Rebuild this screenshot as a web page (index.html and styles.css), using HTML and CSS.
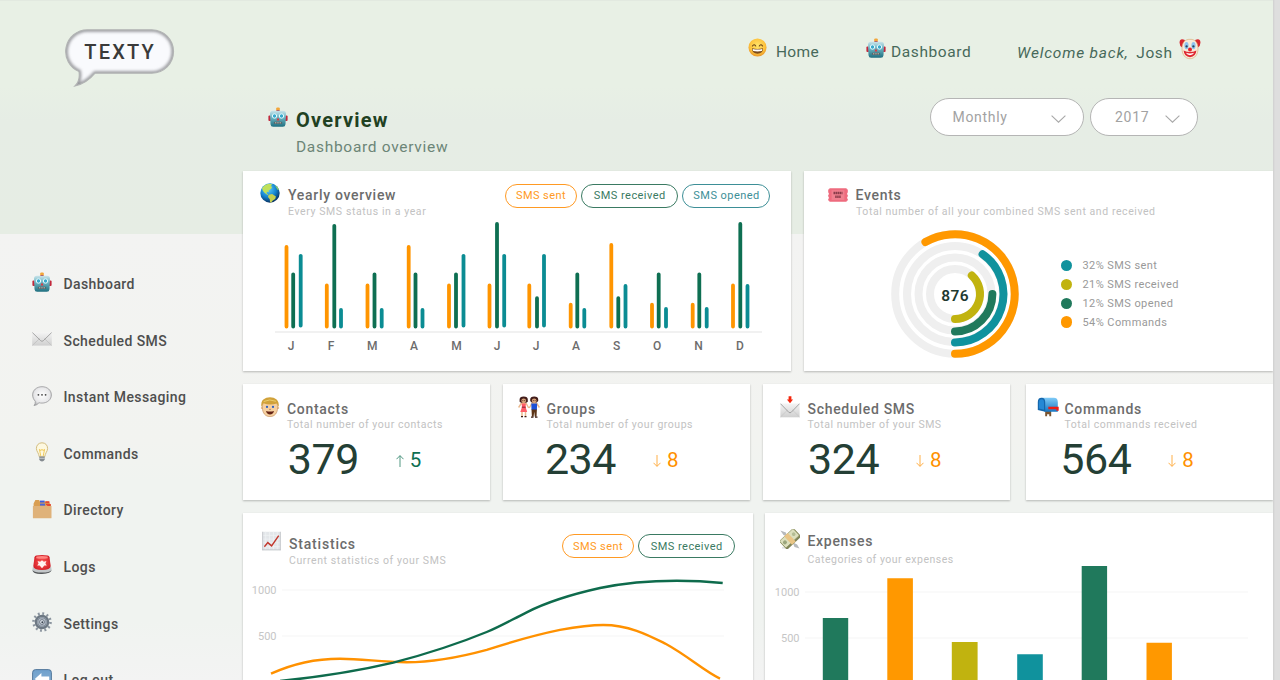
FILE: index.html
```html
<!DOCTYPE html>
<html lang="en">
<head>
<meta charset="utf-8">
<title>Texty – Dashboard</title>
<link rel="stylesheet" href="styles.css">
</head>
<body>
<svg class="defs" width="0" height="0" aria-hidden="true">
  <defs>
    <linearGradient id="gRobot" x1="0" y1="0" x2="0" y2="1"><stop offset="0" stop-color="#c9e3ea"/><stop offset=".4" stop-color="#6fb7c4"/><stop offset="1" stop-color="#1f6f80"/></linearGradient>
    <radialGradient id="gSmile" cx=".5" cy=".4" r=".6"><stop offset="0" stop-color="#ffe56b"/><stop offset=".7" stop-color="#fdc23c"/><stop offset="1" stop-color="#e8952a"/></radialGradient>
    <linearGradient id="gMail" x1="0" y1="0" x2="0" y2="1"><stop offset="0" stop-color="#f4f4f4"/><stop offset="1" stop-color="#cfcfcf"/></linearGradient>
    <radialGradient id="gGlobe" cx=".4" cy=".3" r=".75"><stop offset="0" stop-color="#5fd0ff"/><stop offset=".55" stop-color="#1383cf"/><stop offset="1" stop-color="#06234f"/></radialGradient>
    <linearGradient id="gBlue" x1="0" y1="0" x2="0" y2="1"><stop offset="0" stop-color="#6fa0cc"/><stop offset="1" stop-color="#8fb4d6"/></linearGradient>
    <linearGradient id="gBox" x1="0" y1="0" x2="0" y2="1"><stop offset="0" stop-color="#7fcbf8"/><stop offset="1" stop-color="#1877c2"/></linearGradient>
    <radialGradient id="gRed" cx=".5" cy=".5" r=".7"><stop offset="0" stop-color="#ff5a55"/><stop offset="1" stop-color="#c8101c"/></radialGradient>
    <radialGradient id="gTalk" cx=".5" cy=".45" r=".6"><stop offset="0" stop-color="#ffffff"/><stop offset=".7" stop-color="#e6e6e8"/><stop offset="1" stop-color="#a9a9ab"/></radialGradient>
    <symbol id="robot" viewBox="0 0 20 20">
      <rect x="8.2" y=".4" width="3.6" height="4" rx="1.2" fill="#f2a63a"/><rect x="8.6" y="3" width="2.8" height="1.6" fill="#a33b52"/>
      <rect x=".4" y="8.6" width="3" height="5.4" rx="1" fill="#c2283c"/><rect x="16.6" y="8.6" width="3" height="5.4" rx="1" fill="#c2283c"/>
      <path d="M5 3.800h10q3 0 3 3l-.5 10.400q-.2 2.500-2.700 2.500H5.200q-2.500 0-2.700-2.500L2 6.800q0-3 3-3z" fill="url(#gRobot)"/>
      <circle cx="6.500" cy="9" r="2.200" fill="#3aa9cc" stroke="#e9fbff" stroke-width="1"/><circle cx="13.500" cy="9" r="2.200" fill="#3aa9cc" stroke="#e9fbff" stroke-width="1"/>
      <path d="M10 10.4l1.500 3h-3z" fill="#e2343c"/><rect x="5.8" y="14.8" width="8.4" height="2.1" rx="1" fill="#54686d"/><path d="M7 15.8h6" stroke="#d5c7b8" stroke-width=".9" stroke-dasharray="1 .7"/>
    </symbol>
    <symbol id="smile" viewBox="0 0 20 20">
      <circle cx="10" cy="10" r="9.500" fill="url(#gSmile)"/>
      <path d="M4.700 8.400q1.600-2.600 3.400 0M11.900 8.400q1.600-2.600 3.400 0" fill="none" stroke="#6b4315" stroke-width="1.200" stroke-linecap="round"/>
      <path d="M4.200 10.800q5.800 1.300 11.600 0q0 5.600-5.800 5.800q-5.800-.2-5.800-5.800z" fill="#7a4a1c"/><path d="M5 11.600q5 1.100 10 0q0 1.600-.5 2.200q-4.500.9-9 0q-.5-.8-.5-2.200z" fill="#fff"/>
    </symbol>
    <symbol id="clown" viewBox="0 0 22 22">
      <path d="M6 2Q1-.4.6 4q-.3 4 2.600 5.600zM16 2q5-2.400 5.400 2q.3 4-2.600 5.600z" fill="#d9262e"/>
      <path d="M11 1.300c5.200 0 8 3.200 8 9.400c0 6-3.400 10-8 10s-8-4-8-10C3 4.500 5.800 1.300 11 1.300z" fill="#f7ead8" stroke="#d9a56a" stroke-width=".6"/>
      <ellipse cx="7.500" cy="7.600" rx="2.100" ry="3.600" fill="#8fc4ee"/><ellipse cx="14.500" cy="7.600" rx="2.100" ry="3.600" fill="#8fc4ee"/>
      <circle cx="7.600" cy="8.400" r="1.150" fill="#23475f"/><circle cx="14.400" cy="8.400" r="1.150" fill="#23475f"/>
      <circle cx="11" cy="11.600" r="2" fill="#e3212b"/><path d="M4.600 12.600q6.400 3 12.800 0q-.6 6.400-6.400 6.600q-5.800-.2-6.400-6.600z" fill="#df2730"/><path d="M6.800 14.800q4.200 1.500 8.400 0q-1.400 2.400-4.200 2.400t-4.200-2.400z" fill="#fff"/>
    </symbol>
    <symbol id="mail" viewBox="0 0 20 14">
      <rect x=".2" y=".3" width="19.600" height="13.300" fill="url(#gMail)"/><path d="M.4 13.400L7.600 6.600M19.600 13.400L12.400 6.600" stroke="#bcbcbc" stroke-width=".7"/>
      <path d="M.4.600l8.400 8.200q1.200 1 2.400 0L19.600.600" fill="none" stroke="#9c9c9c" stroke-width=".9"/>
    </symbol>
    <symbol id="talk" viewBox="0 0 20 20">
      <path d="M10 .7c5.400 0 9.400 3.600 9.400 8.200s-4 8.200-9.400 8.200q-1.600 0-3-.4q-1.800 2.400-5 2.900q1.600-2 1.300-4.400C1.600 13.600.6 11.300.6 8.900C.6 4.300 4.600.7 10 .7z" fill="url(#gTalk)" stroke="#a2a2a4" stroke-width=".9"/>
      <g fill="#444"><circle cx="6.400" cy="8.800" r=".9"/><circle cx="10" cy="8.800" r=".9"/><circle cx="13.600" cy="8.800" r=".9"/></g>
    </symbol>
    <symbol id="bulb" viewBox="0 0 20 20">
      <path d="M10 .8c3.500 0 5.600 2.500 5.600 5.600c0 3-2.400 4.600-2.900 8.400H7.300c-.5-3.800-2.900-5.400-2.900-8.400C4.400 3.300 6.500.8 10 .8z" fill="#fdf8e0" stroke="#d3bd80" stroke-width="1"/>
      <path d="M8.800 14L7.400 7.400l1.700 1.200l.9-1.400l.9 1.400l1.700-1.200L11.200 14" fill="none" stroke="#eebf3c" stroke-width=".8"/><path d="M7.300 14.600h5.400v3.200q-1 1.800-2.700 1.800t-2.700-1.800z" fill="#848a8f"/><path d="M7.300 16.300h5.400" stroke="#d5d9dc" stroke-width=".8"/>
    </symbol>
    <symbol id="folder" viewBox="0 0 20 20">
      <path d="M1.600 4.600L3.400.9h3.800l.6 1.500h8.800l2 3.200v3H1.600z" fill="#d99e52"/><path d="M8 1.600h4.600v1.900H8z" fill="#3c5be0"/><path d="M13.400 2.300h4v1.900h-4zM14 5h4.800v2H14z" fill="#e5472f"/><path d="M8 4.600h5v2H8z" fill="#4a66dd"/>
      <path d="M.9 7h12.600l1-1l1 1h4v11.700q0 .6-.6.600H1.500q-.6 0-.6-.6z" fill="#dfb27a"/>
    </symbol>
    <symbol id="siren" viewBox="0 0 20 20">
      <path d="M1 11.600L.3 15q1.700 3.400 9.700 3.400t9.700-3.400L19 11.600z" fill="#c3c7c9"/><path d="M.4 15q2 2.600 9.600 2.600t9.600-2.600q-.3 3.600-9.600 3.900T.4 15z" fill="#55585a"/>
      <path d="M4.300.5q5.700-1 11.400 0q1.500.3 1.800 1.800l1.200 8.600q-.3 4-8.700 4t-8.700-4l1.200-8.600Q2.800.8 4.300.5z" fill="url(#gRed)"/><path d="M4.500 1.400q5.500-1 11 0l.4 1.900q-6 1-11.800 0z" fill="#ff8580"/>
      <path d="M5.600 6l2.600.8l1.800-1.600l1.800 1.600l2.600-.8-1 2.600 1.400 1.800-2.500.2L10 13.200l-2.300-2.600-2.500-.2L6.600 8.600z" fill="#fff3f1"/>
    </symbol>
    <symbol id="gear" viewBox="0 0 20 20">
      <circle cx="10" cy="10" r="8.500" fill="none" stroke="#8b959f" stroke-width="2.600" stroke-dasharray="1.900 2.550"/>
      <circle cx="10" cy="10" r="6.200" fill="#aab4bf" stroke="#6d7883" stroke-width="2.200"/><circle cx="10" cy="10" r="4.100" fill="#bcc5d0" stroke="#7b8692" stroke-width=".9"/><circle cx="10" cy="10" r="2.400" fill="#dfe5ec" stroke="#55606c" stroke-width=".8"/><circle cx="10.300" cy="10.200" r="1" fill="#37424e"/>
    </symbol>
    <symbol id="back" viewBox="0 0 20 20">
      <rect x=".6" y=".6" width="18.800" height="18.800" rx="3" fill="url(#gBlue)" stroke="#54799c" stroke-width="1"/><path d="M2.800 10L9.400 4v3.500h7.800v5H9.400V16z" fill="#fff"/>
    </symbol>
    <symbol id="globe" viewBox="0 0 20 20">
      <circle cx="10" cy="10" r="9.700" fill="url(#gGlobe)"/>
      <path d="M2 5.600Q4.200 1.700 8 1q2.600-.5 4.200.4L10.600 3.200l1.600.6-1 1.900-2.700 1.800.4 1.500-1.600-.2-.9 1.200 1.700 1.600-.6.500L4.800 10 3 8z" fill="#bfe05a"/><path d="M8.600 11.700l3.600-.6 3.700 2.300-.7 2.500-2.400 1.500-1.600 2.100-1.200-.2-.2-3.100-1.800-2.300z" fill="#c6cf4e"/><path d="M14.600 1.700q3.400 1.800 4.500 5.400l-1.600-.4-1.300-2.300z" fill="#8fcf64"/>
    </symbol>
    <symbol id="ticket" viewBox="0 0 20 14">
      <path d="M1.500.2h17q0 1.200 1.300 1.300v3q-.9.400-.6 1.300q-.3.700.6 1.200v1.600q-.9.400-.6 1.200q-.3.900.6 1.300v1.300q-1.300 0-1.300 1.300h-17q0-1.300-1.300-1.300v-1.400q.9-.4.600-1.200q.3-.8-.6-1.200V7q.9-.5.600-1.200q.3-.9-.6-1.300v-3q1.300-.1 1.300-1.300z" fill="#ee6b7e"/><path d="M3.600 2.200h12.800v9.700H3.600z" fill="#f0808f"/>
      <path d="M5.500 5h9" stroke="#8a3c4a" stroke-width="2.300" stroke-dasharray="1.600 .4"/><path d="M7.200 8.800h5.800" stroke="#8a3c4a" stroke-width="2.500" stroke-dasharray="1.500 .5"/>
    </symbol>
    <symbol id="boy" viewBox="0 0 20 20">
      <circle cx="1.900" cy="11" r="1.100" fill="#e8b886"/><circle cx="18.100" cy="11" r="1.100" fill="#e8b886"/>
      <path d="M10 1.500c5.400 0 7.600 3.600 7.600 9c0 5.600-3 9.100-7.600 9.100s-7.600-3.500-7.600-9.100c0-5.400 2.200-9 7.600-9z" fill="#f6d0a0" stroke="#bd8451" stroke-width=".6"/>
      <path d="M1.500 10Q.5 4.500 3.700 2.200Q6 .3 10 .3t6.300 1.900q3.200 2.400 2.200 7.800l-1.700-3.500Q10 8.600 3.400 6.300z" fill="#d1a23a"/><path d="M3.700 4.500q6-3 12.200-.2" fill="none" stroke="#ebce6d"/>
      <path d="M5.500 10q1.400-1.500 2.800 0q-1.400 1-2.800 0zm6.200 0q1.400-1.500 2.800 0q-1.400 1-2.800 0z" fill="#fff"/><circle cx="7" cy="9.900" r="1.150" fill="#315fb8"/><circle cx="13" cy="9.900" r="1.150" fill="#315fb8"/>
      <path d="M6 14.100q4 1 8 0q-.8 3.400-4 3.400t-4-3.400z" fill="#642315"/><path d="M9 12.200q1 .7 2 0" fill="none" stroke="#bd7f52" stroke-width=".8"/>
    </symbol>
    <symbol id="couple" viewBox="0 0 22 22">
      <path d="M.6 11.500l2.600-4h5L10.700 12M11.300 12l2.500-4.500h5l2.600 4" fill="none" stroke="#eab88c" stroke-width="1.400"/><path d="M4 14v6M7.500 14v6" stroke="#eab88c" stroke-width="1.500"/>
      <path d="M1.600 5.800V3.500q0-3.100 4.100-3.100t4.100 3.100v2.300q-1 1.200-4.100 1.200t-4.100-1.200zM12.200 5V3.300Q12.200.4 16.200.4t4 2.900V5q-1 2-4 2t-4-2z" fill="#421d1a"/><circle cx="5.700" cy="4.800" r="2.400" fill="#d9a47a"/><circle cx="16.200" cy="4.800" r="2.400" fill="#d9a47a"/><path d="M4.400 4.600h.9M6.200 4.600h.9M14.900 4.600h.9M16.700 4.600h.9" stroke="#421d1a" stroke-width=".8"/>
      <path d="M3.600 7.600h4.300l-.3 3.400 1.600 5H2.300L4 11z" fill="#ff5d67"/><path d="M3.800 10.600h3.900v1.200H3.800z" fill="#9c2839"/><path d="M13.300 7.500h5.800l-.2 6.500h-5.400z" fill="#1c50d7"/><path d="M13.500 13.500h5.400l-.4 7.200h-1.700l-.6-5-.6 5h-1.700z" fill="#5c3518"/><path d="M3 20.700h2M6.500 20.700h2M13 21.200h2.500M17 21.200h2.500" stroke="#3a1d14" stroke-width="1.300"/>
    </symbol>
    <symbol id="inbox" viewBox="0 0 20 22">
      <path d="M8.600.3h2.800v3.100h1.700L10 7.200 6.900 3.400h1.700z" fill="#f4260c"/><rect x=".4" y="7.500" width="19.200" height="13.800" fill="url(#gMail)"/><path d="M.5 21L7.600 14M19.500 21l-7.100-7" stroke="#c2c2c2" stroke-width=".6"/><path d="M.5 7.700l8.300 8.600q1.200 1 2.400 0L19.500 7.700" fill="none" stroke="#9b9b9b" stroke-width=".9"/>
    </symbol>
    <symbol id="mailbox" viewBox="0 0 22 20">
      <path d="M8.200 14h6v5.300h-1.900v-2h-2.200v2H8.200z" fill="#7a5430"/><path d="M4.600.7h12.200q4 0 4 4.300v9.700H7.500z" fill="url(#gBox)"/><path d="M.8 5Q.8.700 4.500.7T8.200 5v9.700L.8 13z" fill="#1467ad"/><path d="M2 5.200q0-3 2.500-3t2.500 3v7.600L2 11.600z" fill="#2588d5"/><path d="M11.300 9.700h10.400v4.100h-2.300v-1.500h-8.100z" fill="#ee1b14"/>
    </symbol>
    <symbol id="trend" viewBox="0 0 20 20">
      <rect x=".3" y=".3" width="19.400" height="19.400" fill="#e3e6e9"/><path d="M.3 4h19.400M.3 8h19.400M.3 12h19.400M.3 16h19.400M4 .3v19.400M8 .3v19.400M12 .3v19.400M16 .3v19.400" stroke="#f1f3f5" stroke-width=".8"/><path d="M.3 19.300h19.400M19.300.3v19.400M.7.300v19.400" stroke="#c1c4c8" stroke-width=".9"/><path d="M2.500 16l3.600-4.300 4 3.400L17.600 4.400" fill="none" stroke="#c2372c" stroke-width="1.500"/>
    </symbol>
    <symbol id="money" viewBox="0 0 20 20">
      <path d="M.4 1.500l5.500 2 1.200 4-3.600-1.600zM19.500 19.500l-5-1.600-2-4.700 4.600 2.400z" fill="#b7babd"/><path d="M2 18.900h7" stroke="#d2d2d2"/>
      <g transform="rotate(-43 10 10)"><rect x=".4" y="5.500" width="19.600" height="10.400" rx="1" fill="#7f8458"/><rect x=".8" y="4.400" width="18.600" height="9.400" rx="1" fill="#dcdfbd" stroke="#8f9361" stroke-width=".7"/><circle cx="4" cy="9" r="2" fill="#9aa57b"/><circle cx="16" cy="9" r="1.800" fill="#b3bc93"/><path d="M7.500 4h5v11.700h-5z" fill="#e9c586"/></g>
    </symbol>
    <symbol id="chevron" viewBox="0 0 15 8"><path d="M.6.600L7.500 7.200 14.400.600" fill="none" stroke="#a8a8a8" stroke-width="1.100"/></symbol>
    <symbol id="arrow" viewBox="0 0 8 12"><path d="M4 0v11.200M.5 7.800L4 11.400l3.500-3.600" fill="none" stroke="currentColor" stroke-width=".9"/></symbol>
    <clipPath id="logoClip"><path id="logoShape" d="M22.300.8h64.500a21.700 21.700 0 0 1 0 43.400H30Q21.500 54.500 10 57Q15.500 51.500 14 42.500A21.700 21.700 0 0 1 22.300.8z"/></clipPath>
    <filter id="soft" x="-20%" y="-20%" width="140%" height="140%"><feGaussianBlur stdDeviation="1.700"/></filter>
  </defs>
</svg>

<div class="page">
  <div class="app">
    <header class="header">
      <svg class="logo" width="110" height="59" viewBox="0 0 110 59">
        <use href="#logoShape" fill="#f9fafd"/>
        <g clip-path="url(#logoClip)"><use href="#logoShape" fill="none" stroke="#97989c" stroke-width="4" filter="url(#soft)"/></g>
        <use href="#logoShape" fill="none" stroke="#b2b4b4" stroke-width="1.200"/>
        <text class="logo-text" x="19.300" y="30">TEXTY</text>
      </svg>
      <nav class="nav">
        <a class="nav-item home"><svg width="19" height="19"><use href="#smile"/></svg><span>Home</span></a>
        <a class="nav-item dash"><svg width="20" height="20"><use href="#robot"/></svg><span>Dashboard</span></a>
        <a class="nav-item user"><em>Welcome back,</em><span>Josh</span><svg width="22" height="22"><use href="#clown"/></svg></a>
      </nav>
    </header>

    <div class="body">
      <aside class="sidebar">
        <a class="side-item"><svg width="20" height="20"><use href="#robot"/></svg><span>Dashboard</span></a>
        <a class="side-item"><svg width="20" height="20"><use href="#mail"/></svg><span>Scheduled SMS</span></a>
        <a class="side-item"><svg width="20" height="20"><use href="#talk"/></svg><span>Instant Messaging</span></a>
        <a class="side-item"><svg width="20" height="20"><use href="#bulb"/></svg><span>Commands</span></a>
        <a class="side-item"><svg width="20" height="20"><use href="#folder"/></svg><span>Directory</span></a>
        <a class="side-item"><svg width="20" height="20"><use href="#siren"/></svg><span>Logs</span></a>
        <a class="side-item"><svg width="20" height="20"><use href="#gear"/></svg><span>Settings</span></a>
        <a class="side-item"><svg width="20" height="20"><use href="#back"/></svg><span>Log out</span></a>
      </aside>

      <main class="content">
        <div class="title-row">
          <svg class="title-icon" width="20" height="20"><use href="#robot"/></svg>
          <div class="title-text"><h1>Overview</h1><p>Dashboard overview</p></div>
          <div class="selects">
            <div class="select monthly"><span>Monthly</span><svg width="15" height="8"><use href="#chevron"/></svg></div>
            <div class="select year"><span>2017</span><svg width="15" height="8"><use href="#chevron"/></svg></div>
          </div>
        </div>

        <div class="row row-top">
          <section class="card yearly">
            <div class="head">
              <svg class="icon" width="20" height="20"><use href="#globe"/></svg>
              <div class="titles"><h2>Yearly overview</h2><p class="t-year">Every SMS status in a year</p></div>
              <div class="pills"><span class="pill sent">SMS sent</span><span class="pill received">SMS received</span><span class="pill opened">SMS opened</span></div>
            </div>
            <svg class="chart" width="548" height="154" viewBox="243 217 548 154">
              <path d="M275 332H762" stroke="#ececec" stroke-width="1.600"/>
              <g fill="none" stroke-width="3.800" stroke-linecap="round">
                <path stroke="#ff9500" d="M286.500 247V326.500M326.800 285.500V326.500M367.500 285.500V326.500M408.700 247V326.500M449 285.500V326.500M489.500 285.500V326.500M529.300 285.500V326.500M570.700 304.700V326.500M611.300 245V326.500M652 304.700V326.500M692.700 304.700V326.500M733 285.500V326.500"/>
                <path stroke="#0e6f52" d="M293.200 274.300V326.500M334.300 225.800V326.500M374.500 274.300V326.500M415.500 274.300V326.500M456 274.300V326.500M497 224V326.500M537 298.200V326.500M577.300 274.300V326.500M618.300 298.200V326.500M658.700 274.300V326.500M699.300 274.300V326.500M740.300 224V326.500"/>
                <path stroke="#0b8c93" d="M300.700 255.800V325.500M341 310V326.500M381.700 310V326.500M422.500 310V326.500M463.500 255.800V325.500M504.200 255.800V325.500M544 255.800V325.500M584.300 310V326.500M625.500 286V326.500M666 309V326.500M706.700 309V326.500M747.500 286V326.500"/>
              </g>
              <g class="months">
                <text x="291" y="350">J</text><text x="331" y="350">F</text><text x="372.300" y="350">M</text><text x="414" y="350">A</text><text x="456.500" y="350">M</text><text x="497" y="350">J</text>
                <text x="536" y="350">J</text><text x="576" y="350">A</text><text x="616.600" y="350">S</text><text x="657.200" y="350">O</text><text x="698.500" y="350">N</text><text x="740" y="350">D</text>
              </g>
            </svg>
          </section>

          <section class="card events">
            <div class="head">
              <svg class="icon" width="20" height="14"><use href="#ticket"/></svg>
              <div class="titles"><h2>Events</h2><p class="t-events">Total number of all your combined SMS sent and received</p></div>
            </div>
            <div class="events-body">
              <svg class="donut" width="130" height="130" viewBox="-65 -65 130 130">
                <g fill="none" stroke="#efefef" stroke-width="8"><circle r="59.800"/><circle r="48"/><circle r="36.500"/><circle r="25"/></g>
                <g fill="none" stroke-width="8" stroke-linecap="round">
                  <path stroke="#ff9800" d="M0 59.800A59.800 59.800 0 1 0 -29.600 -52"/><path stroke="#10929d" d="M0 48.400A48.400 48.400 0 0 0 27.600 -39.800"/><path stroke="#20795c" d="M0 37.400A37.400 37.400 0 0 0 37.400 0"/><path stroke="#c1b30f" d="M0 25A25 25 0 0 0 16.800 -18.500"/>
                </g>
                <text class="donut-total" x="0" y="7">876</text>
              </svg>
              <ul class="legend">
                <li><i class="dot teal"></i>32% SMS sent</li>
                <li><i class="dot olive"></i>21% SMS received</li>
                <li><i class="dot green"></i>12% SMS opened</li>
                <li><i class="dot orange"></i>54% Commands</li>
              </ul>
            </div>
          </section>
        </div>

        <div class="row row-mid">
          <section class="card stat contacts">
            <svg class="icon" width="20" height="20"><use href="#boy"/></svg>
            <div class="stat-body"><h2>Contacts</h2><p>Total number of your contacts</p><div class="figures"><b>379</b><span class="delta up"><svg width="8" height="12"><use href="#arrow"/></svg>5</span></div></div>
          </section>
          <section class="card stat groups">
            <svg class="icon" width="22" height="22"><use href="#couple"/></svg>
            <div class="stat-body"><h2>Groups</h2><p>Total number of your groups</p><div class="figures"><b>234</b><span class="delta down"><svg width="8" height="12"><use href="#arrow"/></svg>8</span></div></div>
          </section>
          <section class="card stat scheduled">
            <svg class="icon" width="20" height="22"><use href="#inbox"/></svg>
            <div class="stat-body"><h2>Scheduled SMS</h2><p>Total number of your SMS</p><div class="figures"><b>324</b><span class="delta down"><svg width="8" height="12"><use href="#arrow"/></svg>8</span></div></div>
          </section>
          <section class="card stat commands">
            <svg class="icon" width="22" height="20"><use href="#mailbox"/></svg>
            <div class="stat-body"><h2>Commands</h2><p>Total commands received</p><div class="figures"><b>564</b><span class="delta down"><svg width="8" height="12"><use href="#arrow"/></svg>8</span></div></div>
          </section>
        </div>

        <div class="row row-bottom">
          <section class="card statistics">
            <div class="head">
              <svg class="icon" width="19" height="20"><use href="#trend"/></svg>
              <div class="titles"><h2>Statistics</h2><p class="t-stats">Current statistics of your SMS</p></div>
              <div class="pills"><span class="pill sent">SMS sent</span><span class="pill received">SMS received</span></div>
            </div>
            <svg class="chart" width="510" height="128" viewBox="243 569 510 128">
              <path d="M282 590H724M282 636H724" stroke="#f6f6f6" stroke-width="1.200"/>
              <g class="axis"><text x="276.500" y="593.500">1000</text><text x="276.500" y="639.700">500</text></g>
              <path d="M271 673.700C292 664 315 658.700 340 658.700C364 658.700 380 662.200 406.700 662.200C434 662.200 462 656.500 486.700 649.800C508 643 530 636 560 629.900C577 626.800 590 625 603.300 625C630 625 650 636 666 644C688 656 704 671 720 678.600" fill="none" stroke="#ff9100" stroke-width="2.400"/>
              <path d="M280 681C320 677 356 671.500 393.300 662.700C430 653 460 643 486.700 632C501 626 512 619.500 526.700 612.300C549 601 573 594 600 588C626 582.500 652 580.700 676.700 580.700C692 580.700 708 581.500 722.700 583" fill="none" stroke="#0e6b4c" stroke-width="2.400"/>
            </svg>
          </section>

          <section class="card expenses">
            <div class="head">
              <svg class="icon" width="20" height="20"><use href="#money"/></svg>
              <div class="titles"><h2>Expenses</h2><p class="t-exp">Categories of your expenses</p></div>
            </div>
            <svg class="chart" width="508" height="132" viewBox="765 565 508 132">
              <path d="M805 592H1248M805 638H1248" stroke="#f6f6f6" stroke-width="1.200"/>
              <g class="axis"><text x="799.500" y="595.500">1000</text><text x="799.500" y="641.500">500</text></g>
              <g><path fill="#20795c" d="M822.800 618h25.400v90h-25.400zM1081.700 566h25.400v140h-25.400z"/><path fill="#ff9800" d="M887.300 578.300h25.600v120h-25.600zM1146.500 642.800h25.400v60h-25.400z"/><path fill="#c1b30f" d="M951.800 642h25.800v60h-25.800z"/><path fill="#10929d" d="M1017.200 654.300h25.600v50h-25.600z"/></g>
            </svg>
          </section>
        </div>
      </main>
    </div>
  </div>
  <div class="edge"></div>
</div>
</body>
</html>
```
FILE: styles.css
```css
* { box-sizing: border-box; margin: 0; padding: 0; }
body { width: 1280px; height: 680px; overflow: hidden; font-family: Roboto, "Liberation Sans", sans-serif; }
svg { display: block; flex: none; }
.defs { position: absolute; }
.page { display: flex; width: 1280px; height: 680px; overflow: hidden; }
.app {
  width: 1273px; height: 680px; overflow: hidden;
  background: linear-gradient(#e8f0e5 0, #e8f0e5 85px, #e6ede5 120px, #e6ede4 233px, #f3f3f2 233px, #f2f3f0 440px, #f0f3f0 480px, #f0f3f0 620px, #f3f3f3 680px);
  border-top: 1px solid #e2e9e0;
}
.edge { width: 7px; background: linear-gradient(90deg, #cfcfcf, #dedede 2px); }

.header { display: flex; justify-content: space-between; align-items: flex-start; height: 97px; padding: 27.500px 72px 0 64.500px; }
.logo-text { font-size: 20px; font-weight: 500; letter-spacing: 2.200px; fill: #3a3a3a; }
.nav { display: flex; height: 48px; align-items: center; color: #47695a; font-size: 15.500px; }
.nav-item { display: flex; align-items: center; white-space: nowrap; letter-spacing: .5px; }
.home { width: 118px; gap: 9px; }
.home span { margin-top: -1px; letter-spacing: .3px; }
.dash span { margin-top: -1px; letter-spacing: .6px; }
.home svg, .dash svg { margin-top: -10px; }
.dash { width: 151px; gap: 5px; }
.user { width: 184px; }
.user em { width: 120px; letter-spacing: .8px; }
.user span { width: 43px; letter-spacing: .6px; }
.user svg { margin-top: -7px; }

.body { display: grid; grid-template-columns: 243px 1fr; height: 582px; }
.sidebar { padding: 157.700px 0 0 31.500px; }
.side-item { display: flex; align-items: center; gap: 12px; height: 56.600px; font-size: 14px; font-weight: 500; letter-spacing: .4px; color: #4e4e4e; white-space: nowrap; }
.side-item svg { margin-top: -3px; }

.title-row { display: flex; height: 72.500px; padding: 0 75.500px 0 24.500px; }
.title-icon { margin-top: 9px; }
.title-text { margin-left: 8.500px; white-space: nowrap; }
h1 { margin-top: 9.500px; font-size: 20px; line-height: 24px; font-weight: 700; letter-spacing: 1.200px; color: #214122; }
.title-text p { margin-top: 5px; font-size: 15.500px; line-height: 20px; letter-spacing: .7px; color: #6c8577; }
.selects { display: flex; gap: 6px; margin-left: auto; }
.select { display: flex; justify-content: space-between; align-items: center; height: 37.500px; border: 1.300px solid #b5b5b5; border-radius: 19px; background: #fff; font-size: 14px; letter-spacing: .7px; color: #a2a2a2; }
.select svg { margin-top: 4px; }
.monthly { width: 154px; padding: 0 17px 0 22px; }
.year { width: 108px; padding: 0 17px 0 24.500px; }

.row { display: flex; }
.row-top { height: 200px; gap: 13px; margin-top: 0; }
.row-mid { height: 116px; gap: 13px; margin-top: 13.500px; }
.row-bottom { height: 190px; gap: 12px; margin-top: 13px; }
.card { background: #fff; box-shadow: 0 1px 2px rgba(0, 0, 0, .25); flex: none; }
.yearly { width: 548px; }
.events { width: 469px; }
h2 { font-size: 14px; line-height: 17px; font-weight: 500; letter-spacing: .7px; color: #6c6c6c; white-space: nowrap; }
.card p { font-size: 10.500px; line-height: 16px; letter-spacing: .6px; color: #c2c2c2; white-space: nowrap; }
.head { display: flex; }
.head .icon { margin-right: 8px; }

.yearly .head { height: 46px; padding: 0 21px 0 17px; }
.yearly .icon { margin-top: 12px; }
.yearly .titles { padding-top: 16px; }
.pills { display: flex; gap: 4.500px; margin-left: auto; }
.yearly .pills { padding-top: 13px; }
.pill { display: flex; align-items: center; justify-content: center; height: 24px; padding-left: 1px; border: 1px solid currentColor; border-radius: 12px; font-size: 11px; letter-spacing: .45px; white-space: nowrap; }
.sent { width: 72px; color: #ff9a23; }
.received { width: 96.500px; color: #3a7a62; }
.opened { width: 88px; color: #3d8f97; }
.months { font-size: 12px; font-weight: 500; fill: #6c6c6c; text-anchor: middle; }

.events .head { height: 58px; padding-left: 24px; }
.events .icon { margin: 17px 7.500px 0 0; }
.events .titles { padding-top: 16px; }
.t-events { padding-left: .5px; }
.card .t-events { letter-spacing: .57px; }
.events-body { display: flex; padding-left: 86px; }
.donut-total { font-size: 15.500px; font-weight: 600; letter-spacing: .4px; fill: #1f3a30; text-anchor: middle; }
.legend { list-style: none; margin: 28px 0 0 40.500px; }
.legend li { display: flex; align-items: center; height: 18.900px; font-size: 11px; letter-spacing: .42px; color: #999; white-space: nowrap; }
.dot { width: 11.400px; height: 11.400px; margin: -1px 10.600px 0 0; border-radius: 50%; }
.teal { background: #10929d; }
.olive { background: #c1b30f; }
.green { background: #20795c; }
.orange { background: #ff9800; }

.stat { display: flex; width: 247px; }
.commands { margin-left: 3px; }
.stat .icon { margin-top: 13px; }
.stat-body { padding-top: 18px; }
.stat h2 { line-height: 15px; }
.card.stat p { letter-spacing: .54px; }
.contacts { padding-left: 16.500px; }
.contacts .stat-body { padding-left: 7.500px; }
.groups { padding-left: 15px; }
.groups .icon { margin-top: 12px; }
.groups .stat-body { padding-left: 6.500px; }
.scheduled { padding-left: 17px; }
.scheduled .icon { margin-top: 12px; }
.scheduled .stat-body { padding-left: 7.500px; }
.commands { padding-left: 11px; }
.commands .stat-body { padding-left: 5.500px; }
.figures { display: flex; align-items: center; margin-top: 4.300px; }
.figures b { width: 108px; font-size: 43px; line-height: 44px; font-weight: 400; letter-spacing: -.5px; color: #243f35; }
.contacts .figures { margin-left: .8px; }
.groups .figures { margin-left: -1.600px; }
.scheduled .figures { margin-left: .6px; }
.commands .figures { margin-left: -4.200px; }
.delta { display: flex; align-items: center; gap: 6px; font-size: 20.500px; line-height: 24px; padding-top: 1px; }
.delta svg { opacity: .8; margin-top: 2px; }
.up { color: #0e6f52; }
.up svg { transform: scaleY(-1); }
.down { color: #ff9100; }

.statistics { width: 510px; }
.expenses { width: 508px; }
.statistics .head { height: 56px; padding: 0 18.500px 0 19px; }
.statistics .icon { margin-top: 18px; }
.statistics h2 { letter-spacing: .8px; }
.statistics .titles { padding-top: 22.500px; }
.statistics .pills { padding-top: 21px; }
.expenses .head { height: 52px; padding-left: 14.500px; }
.expenses .icon { margin-top: 16px; }
.expenses .titles { padding-top: 19.500px; }
.expenses h2 { line-height: 17px; margin-bottom: 2px; }
.card .t-exp { letter-spacing: .5px; }
.axis { font-size: 11px; fill: #c6c6c6; text-anchor: end; }
```
